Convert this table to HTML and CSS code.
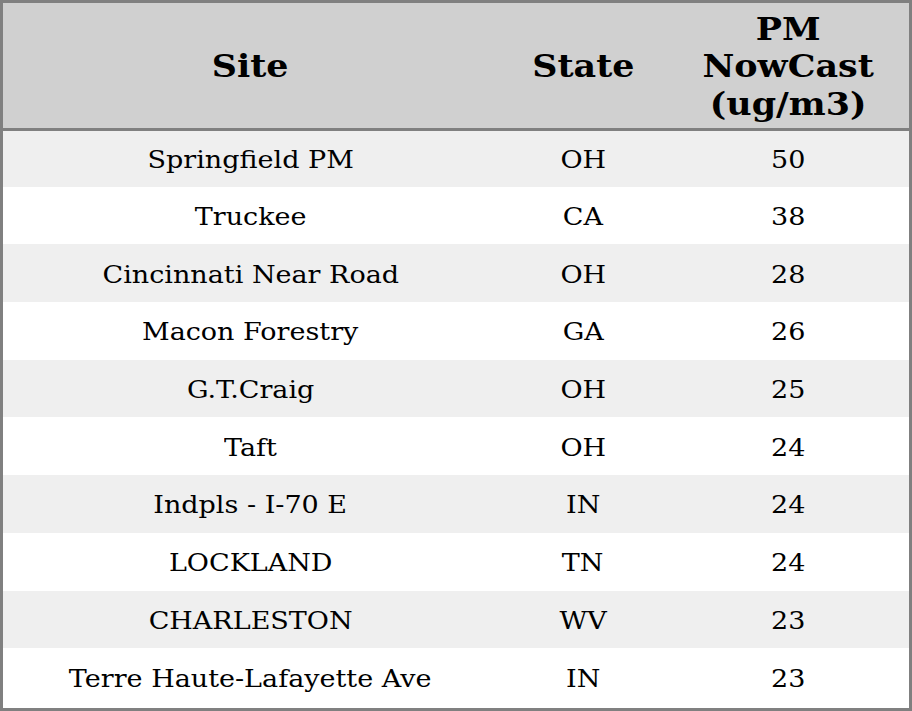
FILE: index.html
```html
<!DOCTYPE html>
<html>
<head>
<meta charset="utf-8">
<link rel="stylesheet" href="styles.css">
</head>
<body>
<div class="frame">
<table class="aq">
<colgroup><col class="c1"><col class="c2"><col class="c3"></colgroup>
<thead>
<tr><th><span class="w">Site</span></th><th><span class="w">State</span></th><th><span class="w">PM<br>NowCast<br>(ug/m3)</span></th></tr>
</thead>
<tbody>
<tr><td><span class="w">Springfield PM</span></td><td><span class="w">OH</span></td><td><span class="w">50</span></td></tr>
<tr><td><span class="w">Truckee</span></td><td><span class="w">CA</span></td><td><span class="w">38</span></td></tr>
<tr><td><span class="w">Cincinnati Near Road</span></td><td><span class="w">OH</span></td><td><span class="w">28</span></td></tr>
<tr><td><span class="w">Macon Forestry</span></td><td><span class="w">GA</span></td><td><span class="w">26</span></td></tr>
<tr><td><span class="w">G.T.Craig</span></td><td><span class="w">OH</span></td><td><span class="w">25</span></td></tr>
<tr><td><span class="w">Taft</span></td><td><span class="w">OH</span></td><td><span class="w">24</span></td></tr>
<tr><td><span class="w">Indpls - I-70 E</span></td><td><span class="w">IN</span></td><td><span class="w">24</span></td></tr>
<tr><td><span class="w">LOCKLAND</span></td><td><span class="w">TN</span></td><td><span class="w">24</span></td></tr>
<tr><td><span class="w">CHARLESTON</span></td><td><span class="w">WV</span></td><td><span class="w">23</span></td></tr>
<tr><td><span class="w">Terre Haute-Lafayette Ave</span></td><td><span class="w">IN</span></td><td><span class="w">23</span></td></tr>
</tbody>
</table>
</div>
</body>
</html>
```
FILE: styles.css
```css
html, body { margin: 0; padding: 0; background: #fff; }
.frame {
  width: 912px;
  height: 711px;
  box-sizing: border-box;
  border: 3px solid #808080;
  font-family: "DejaVu Serif", serif;
  color: #000;
}
.aq {
  width: 906px;
  border-collapse: collapse;
  table-layout: fixed;
}
.c1 { width: 495px; }
.c2 { width: 170px; }
.c3 { width: 241px; }
.w {
  display: inline-block;
  transform: scaleX(1.125);
  white-space: nowrap;
}
.aq thead tr { height: 126px; }
.aq th {
  background: #d0d0d0;
  font-weight: bold;
  font-size: 31px;
  line-height: 37.5px;
  padding: 3px 0 0;
  text-align: center;
  vertical-align: middle;
  border-bottom: 3px solid #808080;
}
.aq tbody tr { height: 57.7px; }
.aq td {
  font-size: 24px;
  padding: 3px 0 0;
  text-align: center;
  vertical-align: middle;
}
.aq tbody tr:nth-child(odd) td { background: #efefef; }
```
